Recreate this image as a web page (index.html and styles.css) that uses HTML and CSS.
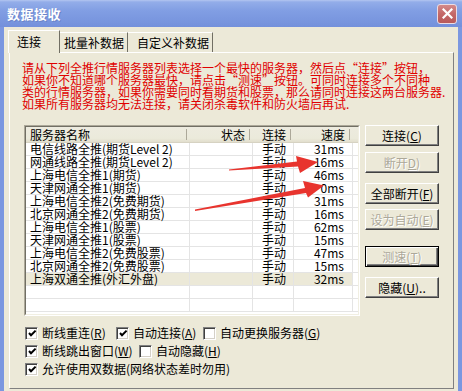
FILE: index.html
```html
<!DOCTYPE html>
<html lang="zh-CN">
<head>
<meta charset="utf-8">
<title>数据接收</title>
<link rel="stylesheet" href="styles.css">
</head>
<body>
<div class="window">
  <div class="titlebar">
    <span class="title">数据接收</span>
    <span class="close"><svg width="11" height="11" viewBox="0 0 11 11"><path d="M1.5 1.5 L9.5 9.5 M9.5 1.5 L1.5 9.5" stroke="#fff" stroke-width="2.2" stroke-linecap="square"/></svg></span>
  </div>
  <div class="client">
    <div class="tabs">
      <div class="tab tab-active">连接</div>
      <div class="tab tab-2">批量补数据</div>
      <div class="tab tab-3">自定义补数据</div>
    </div>
    <div class="panel">
      <p class="notice">请从下列全推行情服务器列表选择一个最快的服务器，然后点“连接”按钮，<br>如果你不知道哪个服务器最快，请点击“测速”按钮。可同时连接多个不同种<br>类的行情服务器，如果你需要同时看期货和股票，那么请同时连接这两台服务器.<br>如果所有服务器均无法连接，请关闭杀毒软件和防火墙后再试.</p>
      <div class="main-row">
        <div class="listview">
          <div class="list-inner">
            <table class="grid">
              <colgroup>
                <col class="col-name"><col class="col-state"><col class="col-conn"><col class="col-speed"><col class="col-fill">
              </colgroup>
              <thead>
                <tr><th class="h-name">服务器名称</th><th class="h-state">状态</th><th class="h-conn">连接</th><th class="h-speed">速度</th><th class="h-fill"></th></tr>
              </thead>
              <tbody>
                <tr><td class="c-name">电信线路全推(期货Level 2)</td><td></td><td class="c-conn">手动</td><td class="c-speed">31ms</td><td class="c-fill"></td></tr>
                <tr><td class="c-name">网通线路全推(期货Level 2)</td><td></td><td class="c-conn">手动</td><td class="c-speed">16ms</td><td class="c-fill"></td></tr>
                <tr><td class="c-name">上海电信全推1(期货)</td><td></td><td class="c-conn">手动</td><td class="c-speed">46ms</td><td class="c-fill"></td></tr>
                <tr><td class="c-name">天津网通全推1(期货)</td><td></td><td class="c-conn">手动</td><td class="c-speed">0ms</td><td class="c-fill"></td></tr>
                <tr><td class="c-name">上海电信全推2(免费期货)</td><td></td><td class="c-conn">手动</td><td class="c-speed">31ms</td><td class="c-fill"></td></tr>
                <tr><td class="c-name">北京网通全推2(免费期货)</td><td></td><td class="c-conn">手动</td><td class="c-speed">16ms</td><td class="c-fill"></td></tr>
                <tr><td class="c-name">上海电信全推1(股票)</td><td></td><td class="c-conn">手动</td><td class="c-speed">62ms</td><td class="c-fill"></td></tr>
                <tr><td class="c-name">天津网通全推1(股票)</td><td></td><td class="c-conn">手动</td><td class="c-speed">15ms</td><td class="c-fill"></td></tr>
                <tr><td class="c-name">上海电信全推2(免费股票)</td><td></td><td class="c-conn">手动</td><td class="c-speed">47ms</td><td class="c-fill"></td></tr>
                <tr><td class="c-name">北京网通全推2(免费股票)</td><td></td><td class="c-conn">手动</td><td class="c-speed">15ms</td><td class="c-fill"></td></tr>
                <tr class="selected"><td class="c-name">上海双通全推(外汇外盘)</td><td></td><td class="c-conn">手动</td><td class="c-speed">32ms</td><td class="c-fill"></td></tr>
                <tr><td class="c-name"></td><td></td><td class="c-conn"></td><td class="c-speed"></td><td class="c-fill"></td></tr>
                <tr><td class="c-name"></td><td></td><td class="c-conn"></td><td class="c-speed"></td><td class="c-fill"></td></tr>
              </tbody>
            </table>
          </div>
        </div>
        <div class="buttons">
          <button class="btn">连接(<u>C</u>)</button>
          <button class="btn btn-disabled gap-6">断开<u>D</u>)</button>
          <button class="btn gap-10">全部断开(<u>F</u>)</button>
          <button class="btn btn-disabled gap-5">设为自动(<u>E</u>)</button>
          <button class="btn btn-default btn-disabled gap-16">测速(<u>T</u>)</button>
          <button class="btn gap-10">隐藏(<u>U</u>)..</button>
        </div>
      </div>
      <div class="checks">
        <div class="check-row">
          <label class="check w-91"><span class="box"><svg width="9" height="9" viewBox="0 0 9 9"><polyline points="1,4 3,6.2 7.6,1.6" fill="none" stroke="#000" stroke-width="2"/></svg></span><span class="label">断线重连(<u>R</u>)</span></label>
          <label class="check w-87"><span class="box"><svg width="9" height="9" viewBox="0 0 9 9"><polyline points="1,4 3,6.2 7.6,1.6" fill="none" stroke="#000" stroke-width="2"/></svg></span><span class="label">自动连接(<u>A</u>)</span></label>
          <label class="check"><span class="box"></span><span class="label">自动更换服务器(<u>G</u>)</span></label>
        </div>
        <div class="check-row">
          <label class="check w-114"><span class="box"><svg width="9" height="9" viewBox="0 0 9 9"><polyline points="1,4 3,6.2 7.6,1.6" fill="none" stroke="#000" stroke-width="2"/></svg></span><span class="label">断线跳出窗口(<u>W</u>)</span></label>
          <label class="check"><span class="box"></span><span class="label">自动隐藏(<u>H</u>)</span></label>
        </div>
        <div class="check-row">
          <label class="check"><span class="box"><svg width="9" height="9" viewBox="0 0 9 9"><polyline points="1,4 3,6.2 7.6,1.6" fill="none" stroke="#000" stroke-width="2"/></svg></span><span class="label">允许使用双数据(网络状态差时勿用)</span></label>
        </div>
      </div>
    </div>
  </div>
  <svg class="arrows" width="462" height="391" viewBox="0 0 462 391">
    <polygon points="229,170.5 298,166.5 300,173 318,162 296,156 297,161.5 229,169.5" fill="#E8342E"/>
    <polygon points="195,209.5 305,188 303,181 324,185.5 308,197.5 306,193 195,211" fill="#E8342E"/>
  </svg>
</div>
</body>
</html>
```
FILE: styles.css
```css
html, body {
  margin: 0;
  padding: 0;
}
body {
  width: 462px;
  height: 391px;
  overflow: hidden;
  background: #ECE9D8;
  font-family: "Noto Sans CJK SC", sans-serif;
  font-size: 12px;
  color: #000;
}
.window {
  position: relative;
  width: 462px;
  height: 391px;
  display: flex;
  flex-direction: column;
}
.titlebar {
  flex: none;
  height: 27px;
  box-sizing: border-box;
  display: flex;
  align-items: center;
  justify-content: space-between;
  padding: 0 5px 0 7px;
  background: linear-gradient(to bottom, #B3C6F0 0, #93ADE9 2px, #819EE3 40%, #7895DE 80%, #7390DB 100%);
}
.title {
  color: #fff;
  font-weight: bold;
  font-size: 13px;
  line-height: 16px;
  letter-spacing: 0.5px;
  text-shadow: 1px 1px 0 #6A84C8;
}
.close {
  width: 20px;
  height: 20px;
  box-sizing: border-box;
  border: 1px solid #EADCE4;
  border-radius: 3px;
  background: linear-gradient(to bottom, #D38A8A 0, #C46868 50%, #B85A5A 100%);
  display: flex;
  align-items: center;
  justify-content: center;
}
.client {
  flex: 1;
  border-left: 4px solid #7B97E0;
  border-right: 4px solid #7B97E0;
  padding: 3px 4px 0 5px;
  background: #ECE9D8;
}
.tabs {
  display: flex;
  align-items: flex-end;
  height: 22px;
  margin-left: -1px;
}
.tab {
  box-sizing: border-box;
  height: 20px;
  line-height: 19px;
  border-top: 1px solid #fff;
  border-right: 1px solid #716F64;
  background: #ECE9D8;
  white-space: nowrap;
}
.tab-active {
  position: relative;
  z-index: 1;
  width: 52px;
  height: 23px;
  margin-bottom: -1px;
  padding: 2px 0 0 8px;
  line-height: 18px;
  border-left: 1px solid #fff;
}
.tab-2 {
  width: 68px;
  padding-left: 4px;
}
.tab-3 {
  width: 85px;
  padding-left: 9px;
}
.panel {
  box-sizing: border-box;
  height: 337px;
  border: 1px solid;
  border-color: #fff #808080 #808080 #fff;
  padding: 9px 0 0 12px;
  background: #ECE9D8;
}
.notice {
  margin: 0;
  color: #E00000;
  line-height: 12px;
  white-space: nowrap;
}
.main-row {
  display: flex;
  align-items: flex-start;
  gap: 5px;
  margin-top: 15px;
  margin-left: 2px;
}
.listview {
  box-sizing: border-box;
  width: 336px;
  height: 191px;
  border: 1px solid;
  border-color: #ACA899 #fff #fff #ACA899;
}
.list-inner {
  box-sizing: border-box;
  height: 100%;
  border: 1px solid;
  border-color: #716F64 #F1EFE2 #F1EFE2 #716F64;
  background: #fff;
  overflow: hidden;
}
.grid {
  table-layout: fixed;
  width: 332px;
  border-collapse: separate;
  border-spacing: 0;
}
.col-name { width: 164px; }
.col-state { width: 63px; }
.col-conn { width: 41px; }
.col-speed { width: 59px; }
.col-fill { width: 5px; }
.grid th {
  box-sizing: border-box;
  height: 16px;
  padding: 0;
  font-weight: normal;
  line-height: 14px;
  white-space: nowrap;
  border-bottom: 1px solid #D6D2C2;
  background:
    linear-gradient(#ACA899, #ACA899) right 3px top 2px / 1px 11px no-repeat,
    linear-gradient(to bottom, #EDEBDF 0, #EBEADB 75%, #E2DECD 100%);
}
.grid th.h-fill {
  background: linear-gradient(to bottom, #EDEBDF 0, #EBEADB 75%, #E2DECD 100%);
}
.grid th.h-name { text-align: left; padding-left: 4px; }
.grid th.h-state { text-align: right; padding-right: 8px; }
.grid th.h-conn { text-align: left; padding-left: 9px; }
.grid th.h-speed { text-align: right; padding-right: 8px; }
.grid td {
  box-sizing: border-box;
  height: 13px;
  padding: 0;
  line-height: 12px;
  white-space: nowrap;
  border-right: 1px solid #E4E4E4;
  border-bottom: 1px solid #E4E4E4;
}
.grid td.c-fill {
  border-right: none;
}
.grid td.c-name { padding-left: 4px; }
.grid td.c-conn { padding-left: 9px; }
.grid td.c-speed { text-align: right; padding-right: 8px; }
.selected td {
  background: #ECE9D8;
}
.grid .selected td.c-fill {
  background: #fff;
}
.buttons {
  display: flex;
  flex-direction: column;
  width: 74px;
}
.btn {
  box-sizing: border-box;
  width: 74px;
  height: 21px;
  padding: 0;
  margin: 0;
  font-family: inherit;
  font-size: 12px;
  line-height: 17px;
  color: #000;
  background: #ECE9D8;
  border: 1px solid;
  border-color: #fff #404040 #404040 #fff;
  box-shadow: inset -1px -1px 0 #808080;
  text-align: center;
  white-space: nowrap;
}
.btn u {
  text-decoration: underline;
  text-underline-offset: 1px;
}
.btn-disabled {
  color: #ACA899;
  text-shadow: 1px 1px 0 #fff;
}
.btn-default {
  border-color: #000;
  box-shadow: inset 1px 1px 0 #fff, inset -1px -1px 0 #404040, inset -2px -2px 0 #808080;
}
.gap-5 { margin-top: 5px; }
.gap-6 { margin-top: 6px; }
.gap-10 { margin-top: 10px; }
.gap-16 { margin-top: 16px; }
.checks {
  margin-top: 8px;
  margin-left: 3px;
  display: flex;
  flex-direction: column;
}
.check-row {
  display: flex;
  align-items: center;
  height: 18px;
}
.check {
  display: flex;
  align-items: center;
  gap: 4px;
  white-space: nowrap;
}
.label {
  line-height: 14px;
}
.w-91 { width: 91px; }
.w-87 { width: 87px; }
.w-114 { width: 114px; }
.box {
  box-sizing: border-box;
  width: 13px;
  height: 13px;
  flex: none;
  border: 1px solid;
  border-color: #808080 #fff #fff #808080;
  background: #fff;
  box-shadow: inset 1px 1px 0 #404040, inset -1px -1px 0 #D4D0C8;
  display: flex;
  align-items: center;
  justify-content: center;
}
.box svg {
  display: block;
  margin: 1px 0 0 1px;
}
.arrows {
  position: absolute;
  left: 0;
  top: 0;
  pointer-events: none;
}
```
